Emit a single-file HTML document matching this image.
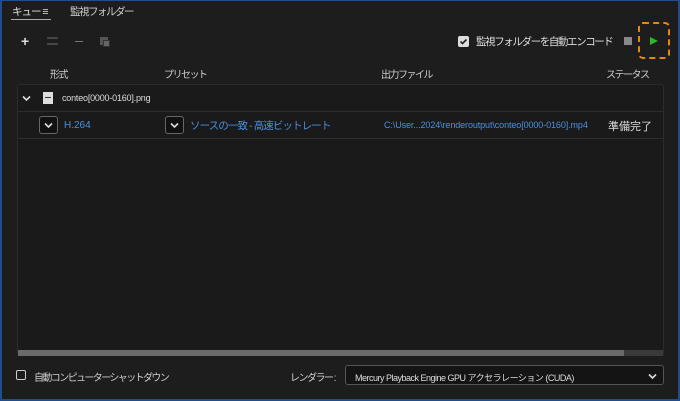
<!DOCTYPE html>
<html><head><meta charset="utf-8"><style>
*{box-sizing:border-box;margin:0;padding:0}
body{width:680px;height:401px;background:#1d1d1d;font-family:"Liberation Sans","Noto Sans CJK JP",sans-serif;color:#d0d0d0;font-size:10px;position:relative;overflow:hidden}
.frame{position:absolute;left:0;top:0;width:680px;height:401px;border:2px solid #1f4e8f;border-top:1px solid #1f4e8f}
.a{position:absolute;white-space:nowrap}
.list{position:absolute;left:17px;top:84px;width:647px;height:272px;background:#1a1a1a;border:1px solid #2c2c2c;border-radius:3px}
.row{position:absolute;left:0;width:645px;border-bottom:1px solid #2e2e2e}
.dd{position:absolute;width:19px;height:18px;border:1px solid #666;border-radius:3px;background:#111}
.dd svg{position:absolute;left:4px;top:5px}
.blue{color:#4a90e2}
.c{letter-spacing:-1.5px}
</style></head><body>
<div class="frame"></div>
<div class="a" style="left:12px;top:4px;font-size:10.5px;color:#e0e0e0;letter-spacing:-1px">キュー <span>≡</span></div>
<div class="a" style="left:11px;top:19px;width:40px;height:1px;background:#aaa"></div>
<div class="a c" style="left:70px;top:4px;font-size:10.5px;color:#ccc">監視フォルダー</div>
<div class="a" style="left:21px;top:33px;font-size:14px;font-weight:bold;color:#ddd">+</div>
<div class="a" style="left:47px;top:37px;width:11px;height:8px;border-top:2px solid #444;border-bottom:2px solid #444"></div>
<div class="a" style="left:75px;top:41px;width:8px;height:1px;background:#777"></div>
<div class="a" style="left:100px;top:37px;width:8px;height:8px;background:#555"></div>
<div class="a" style="left:103px;top:40px;width:7px;height:7px;background:#666;border:1px solid #333"></div>
<div class="a" style="left:458px;top:36px;width:11px;height:11px;background:#ddd;border-radius:2px"><svg width="11" height="11"><path d="M2.5 5.5l2 2 4-4" stroke="#222" stroke-width="1.6" fill="none"/></svg></div>
<div class="a" style="left:476px;top:34px;font-size:10.5px;color:#ddd;letter-spacing:-1.4px">監視フォルダーを自動エンコード</div>
<div class="a" style="left:624px;top:37px;width:8px;height:8px;background:#888"></div>
<div class="a" style="left:638px;top:22px;width:32px;height:37px;border:2px dashed #e8880a;border-radius:5px"></div>
<svg class="a" style="left:649px;top:36px" width="10" height="10"><path d="M1 1L9 5L1 9Z" fill="#2eb82e"/></svg>
<div class="a c" style="left:50px;top:66px;color:#ccc">形式</div>
<div class="a c" style="left:164px;top:66px;color:#ccc">プリセット</div>
<div class="a c" style="left:381px;top:66px;color:#ccc">出力ファイル</div>
<div class="a c" style="left:606px;top:66px;color:#ccc">ステータス</div>
<div class="list">
 <div class="row" style="top:0;height:27px"></div>
 <div class="row" style="top:27px;height:27px"></div>
 <svg class="a" style="left:4px;top:10px" width="9" height="7"><path d="M1 1.5l3.5 3.5 3.5-3.5" stroke="#ddd" stroke-width="1.6" fill="none"/></svg>
 <div class="a" style="left:25px;top:7px;width:10px;height:12px;background:#ddd"><div style="margin:5px 2px 0;height:1px;background:#333"></div></div>
 <div class="a" style="left:44px;top:8px;color:#ddd;font-size:9px;letter-spacing:-0.2px">conteo[0000-0160].png</div>
 <div class="dd" style="left:21px;top:31px"><svg width="9" height="7"><path d="M1 1.5l3.5 3.5 3.5-3.5" stroke="#ddd" stroke-width="1.6" fill="none"/></svg></div>
 <div class="a blue" style="left:46px;top:35px">H.264</div>
 <div class="dd" style="left:147px;top:31px"><svg width="9" height="7"><path d="M1 1.5l3.5 3.5 3.5-3.5" stroke="#ddd" stroke-width="1.6" fill="none"/></svg></div>
 <div class="a blue" style="left:172px;top:33px;font-size:10.5px;letter-spacing:-0.9px">ソースの一致 - 高速ビットレート</div>
 <div class="a blue" style="left:366px;top:35px;font-size:9px;letter-spacing:-0.1px">C:\User...2024\renderoutput\conteo[0000-0160].mp4</div>
 <div class="a" style="left:590px;top:33px;font-size:11px;color:#ddd">準備完了</div>
 <div class="a" style="left:0;top:265px;width:645px;height:6px;background:#3a3a3a"><div style="width:606px;height:6px;background:#6a6a6a"></div></div>
</div>
<div class="a" style="left:16px;top:370px;width:10px;height:10px;border:1.5px solid #ccc;border-radius:2px"></div>
<div class="a" style="left:34px;top:369px;color:#ccc;font-size:10px;letter-spacing:-1.6px">自動コンピューターシャットダウン</div>
<div class="a" style="left:290px;top:369px;color:#ccc;font-size:10px;letter-spacing:-1.5px">レンダラー :</div>
<div class="a" style="left:345px;top:365px;width:319px;height:20px;border:1px solid #555;border-radius:3px;background:#141414">
 <div class="a" style="left:9px;top:5px;color:#ddd;font-size:9px;letter-spacing:-0.5px">Mercury Playback Engine GPU アクセラレーション (CUDA)</div>
 <svg class="a" style="left:302px;top:7px" width="9" height="7"><path d="M1 1.5l3.5 3.5 3.5-3.5" stroke="#ddd" stroke-width="1.6" fill="none"/></svg>
</div>
</body></html>
